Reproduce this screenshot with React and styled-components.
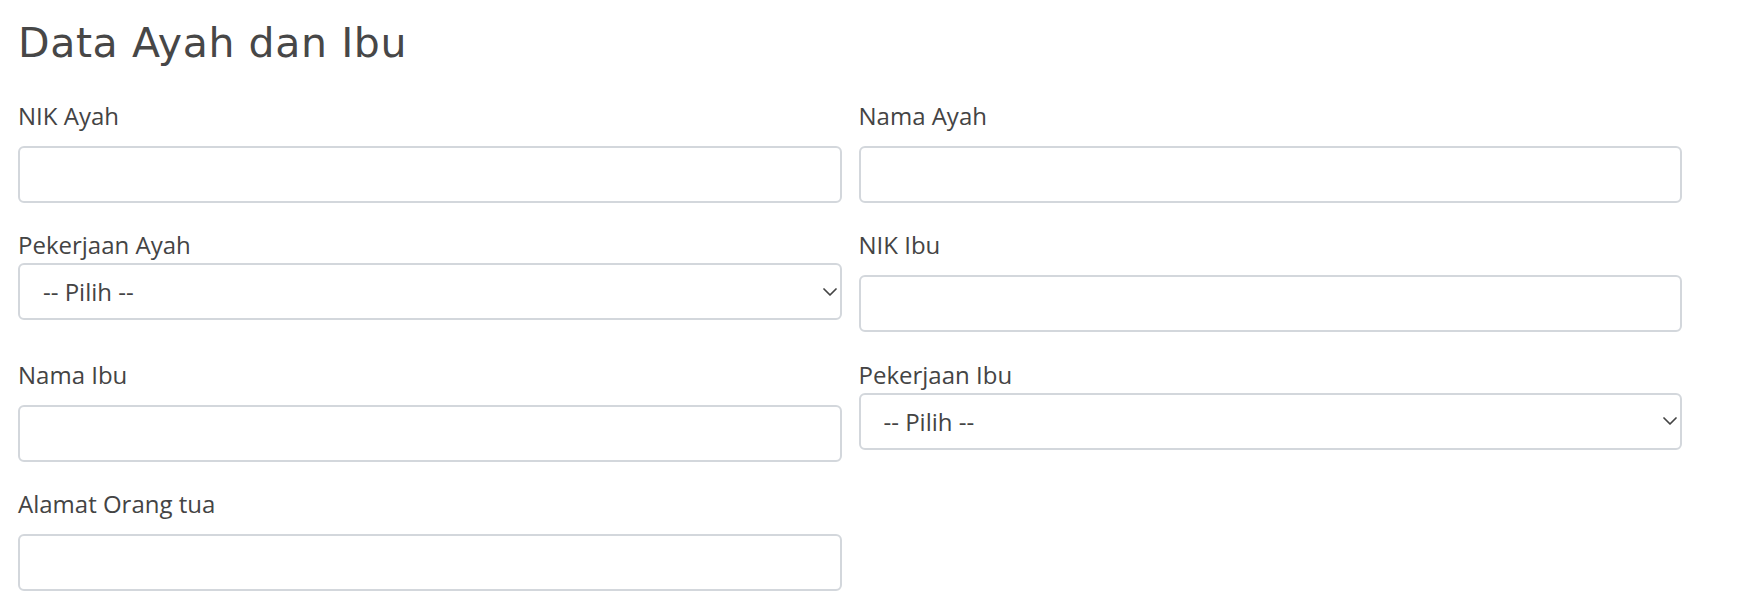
import React from "react";
import styled, { createGlobalStyle } from "styled-components";

const GlobalStyle = createGlobalStyle`
  body {
    margin: 0;
    background: #fff;
    font-family: "Open Sans", "Noto Sans", sans-serif;
    color: #444;
  }
`;

const fields = [
  { label: "NIK Ayah", type: "input" },
  { label: "Nama Ayah", type: "input" },
  { label: "Pekerjaan Ayah", type: "select" },
  { label: "NIK Ibu", type: "input" },
  { label: "Nama Ibu", type: "input" },
  { label: "Pekerjaan Ibu", type: "select" },
  { label: "Alamat Orang tua", type: "input" },
];

const App = () => {
  return (
    <Page>
      <GlobalStyle />
      <Title>Data Ayah dan Ibu</Title>
      <FormGrid>
        {fields.map((f) => (
          <Field key={f.label}>
            <Label $tight={f.type === "select"}>{f.label}</Label>
            {f.type === "select" ? (
              <SelectWrap>
                <Select defaultValue="">
                  <option value="">-- Pilih --</option>
                </Select>
                <Chevron viewBox="0 0 14 8" width="14" height="8">
                  <path
                    d="M1 1 L7 7 L13 1"
                    fill="none"
                    stroke="#444"
                    strokeWidth="1.7"
                    strokeLinecap="round"
                    strokeLinejoin="round"
                  />
                </Chevron>
              </SelectWrap>
            ) : (
              <TextInput type="text" />
            )}
          </Field>
        ))}
      </FormGrid>
    </Page>
  );
};

export default App;

const Page = styled.div`
  padding: 19px 61px 20px 18px;
`;

const Title = styled.h3`
  margin: 0 0 31px;
  font-family: "DejaVu Sans", "Open Sans", sans-serif;
  font-weight: 400;
  font-size: 41px;
  letter-spacing: 0.6px;
  line-height: 1.2;
  color: #474747;
`;

const FormGrid = styled.div`
  display: grid;
  grid-template-columns: 1fr 1fr;
  column-gap: 17px;
  row-gap: 25.5px;
  align-items: start;
`;

const Field = styled.div`
  display: flex;
  flex-direction: column;
`;

const Label = styled.label`
  font-size: 24px;
  line-height: 34.8px;
  color: #444;
  margin-bottom: ${(p) => (p.$tight ? "0" : "12px")};
`;

const TextInput = styled.input`
  box-sizing: border-box;
  height: 57px;
  width: 100%;
  padding: 0 17px;
  border: 2px solid #d3d7dc;
  border-radius: 6px;
  background: #fff;
  font-family: "Open Sans", sans-serif;
  font-size: 24px;
  color: #444;
  outline: none;
`;

const SelectWrap = styled.div`
  position: relative;
`;

const Select = styled.select`
  box-sizing: border-box;
  appearance: none;
  -webkit-appearance: none;
  height: 57px;
  width: 100%;
  padding: 0 40px 0 23px;
  border: 2px solid #d3d7dc;
  border-radius: 6px;
  background: #fff;
  font-family: "Open Sans", sans-serif;
  font-size: 24px;
  color: #444;
  outline: none;
`;

const Chevron = styled.svg`
  position: absolute;
  right: 5px;
  top: 50%;
  transform: translateY(-50%);
  pointer-events: none;
`;
